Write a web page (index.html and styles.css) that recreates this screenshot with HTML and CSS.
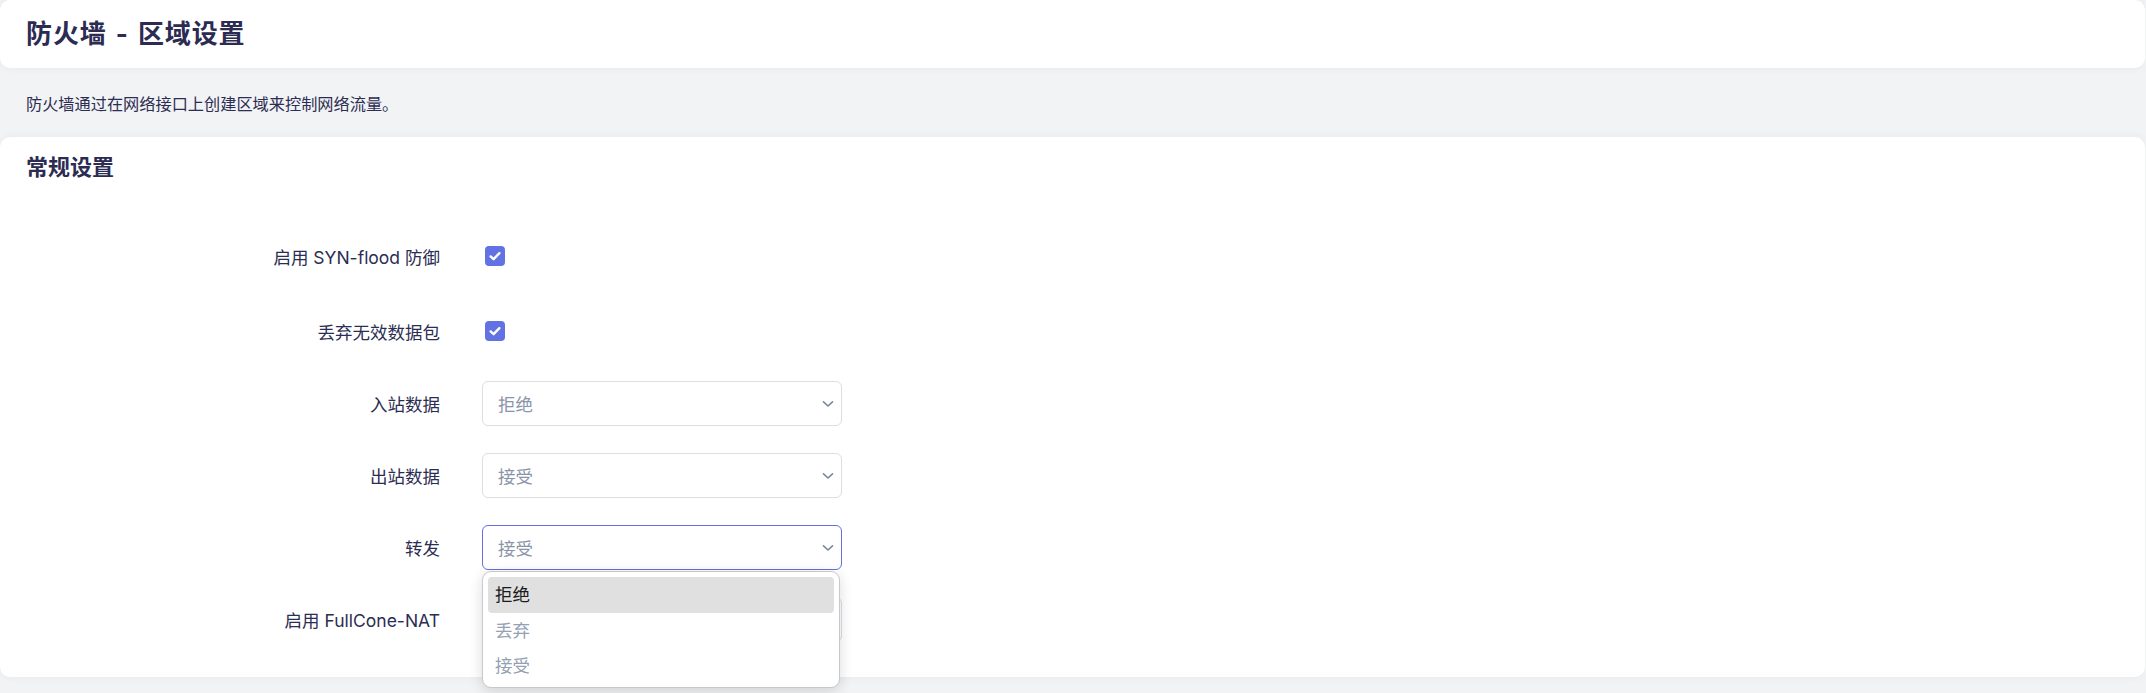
FILE: index.html
```html
<!DOCTYPE html>
<html lang="zh-CN">
<head>
<meta charset="utf-8">
<title>防火墙 - 区域设置</title>
<link rel="stylesheet" href="styles.css">
</head>
<body>
<div class="page">
  <header class="card head-card">
    <h1 class="page-title">防火墙 - 区域设置</h1>
  </header>
  <p class="desc">防火墙通过在网络接口上创建区域来控制网络流量。</p>
  <section class="card main-card">
    <h2 class="section-title">常规设置</h2>
    <div class="form">
      <div class="row row-check">
        <label class="label">启用 SYN-flood 防御</label>
        <div class="control">
          <span class="checkbox"><svg viewBox="0 0 20 20" width="20" height="20"><path d="M5.6 10.4 L8.6 13.2 L14.4 7.2" fill="none" stroke="#fff" stroke-width="2.4" stroke-linecap="round" stroke-linejoin="round"/></svg></span>
        </div>
      </div>
      <div class="row row-check">
        <label class="label">丢弃无效数据包</label>
        <div class="control">
          <span class="checkbox"><svg viewBox="0 0 20 20" width="20" height="20"><path d="M5.6 10.4 L8.6 13.2 L14.4 7.2" fill="none" stroke="#fff" stroke-width="2.4" stroke-linecap="round" stroke-linejoin="round"/></svg></span>
        </div>
      </div>
      <div class="row">
        <label class="label">入站数据</label>
        <div class="control">
          <div class="select"><span class="value">拒绝</span><svg class="chev" viewBox="0 0 12 8" width="12" height="8"><path d="M1.5 1.8 L6 6 L10.5 1.8" fill="none" stroke="#7d889d" stroke-width="1.6" stroke-linecap="round" stroke-linejoin="round"/></svg></div>
        </div>
      </div>
      <div class="row">
        <label class="label">出站数据</label>
        <div class="control">
          <div class="select"><span class="value">接受</span><svg class="chev" viewBox="0 0 12 8" width="12" height="8"><path d="M1.5 1.8 L6 6 L10.5 1.8" fill="none" stroke="#7d889d" stroke-width="1.6" stroke-linecap="round" stroke-linejoin="round"/></svg></div>
        </div>
      </div>
      <div class="row">
        <label class="label">转发</label>
        <div class="control">
          <div class="select select-open"><span class="value">接受</span><svg class="chev" viewBox="0 0 12 8" width="12" height="8"><path d="M1.5 1.8 L6 6 L10.5 1.8" fill="none" stroke="#7d889d" stroke-width="1.6" stroke-linecap="round" stroke-linejoin="round"/></svg></div>
          <ul class="dropdown">
            <li class="opt opt-active">拒绝</li>
            <li class="opt">丢弃</li>
            <li class="opt">接受</li>
          </ul>
        </div>
      </div>
      <div class="row">
        <label class="label">启用 FullCone-NAT</label>
        <div class="control">
          <div class="select"><span class="value"></span><svg class="chev" viewBox="0 0 12 8" width="12" height="8"><path d="M1.5 1.8 L6 6 L10.5 1.8" fill="none" stroke="#7d889d" stroke-width="1.6" stroke-linecap="round" stroke-linejoin="round"/></svg></div>
        </div>
      </div>
    </div>
  </section>
</div>
</body>
</html>
```
FILE: styles.css
```css
* { box-sizing: border-box; }
html, body {
  margin: 0;
  padding: 0;
  background: #f2f3f5;
  font-family: Inter, "Noto Sans CJK SC", sans-serif;
  color: #2c2d52;
}
.page {
  display: flex;
  flex-direction: column;
  width: 2145px;
  height: 693px;
  overflow: hidden;
}
.card {
  background: #ffffff;
  border-radius: 10px;
  box-shadow: 0 0 10px rgba(0, 0, 0, 0.05);
}
.head-card {
  height: 68px;
  display: flex;
  align-items: center;
  padding: 0 26px;
}
.page-title {
  margin: 0;
  font-size: 26px;
  line-height: 34px;
  font-weight: 700;
  color: #2c2b52;
  letter-spacing: 0.9px;
  word-spacing: 2px;
}
.desc {
  margin: 0;
  height: 69px;
  display: flex;
  align-items: center;
  padding: 1px 26px 0;
  font-size: 16.2px;
  color: #2c2d52;
}
.main-card {
  height: 540px;
  padding: 15px 26px 0;
}
.section-title {
  margin: 0;
  font-size: 22px;
  line-height: 30px;
  font-weight: 700;
  color: #2c2b52;
}
.form {
  display: flex;
  flex-direction: column;
  gap: 27px;
  margin-top: 50px;
}
.row {
  display: grid;
  grid-template-columns: 414px 360px;
  column-gap: 42px;
  align-items: center;
  height: 45px;
}
.row-check { height: 48px; }
.row-check + .row:not(.row-check) { margin-top: -1px; }
.label {
  text-align: right;
  font-size: 17.5px;
  color: #2c2d52;
}
.control {
  position: relative;
  height: 100%;
  display: flex;
  align-items: center;
}
.checkbox {
  width: 20px;
  height: 20px;
  margin-left: 3px;
  border-radius: 4px;
  background: #6272e3;
  display: flex;
  align-items: center;
  justify-content: center;
}
.select {
  width: 360px;
  height: 45px;
  border: 1px solid #dddde6;
  border-radius: 6px;
  background: #fff;
  display: flex;
  align-items: center;
  justify-content: space-between;
  padding: 0 7px 0 15px;
}
.select-open {
  border-color: #6470e0;
}
.value {
  font-size: 17.5px;
  color: #8a94a8;
}
.chev { display: block; }
.dropdown {
  position: absolute;
  left: 0;
  top: 46px;
  width: 358px;
  margin: 0;
  padding: 5px 5px 4px;
  list-style: none;
  background: #fff;
  border: 1px solid #c9c9cc;
  border-radius: 9px;
  box-shadow: 0 3px 14px rgba(0, 0, 0, 0.14);
  z-index: 5;
}
.opt {
  height: 35px;
  line-height: 35px;
  padding: 0 7px;
  border-radius: 4px;
  font-size: 17.5px;
  color: #95a0b2;
}
.opt-active {
  background: #e0e0e0;
  color: #1a1a1a;
  height: 36px;
  line-height: 36px;
}
```
